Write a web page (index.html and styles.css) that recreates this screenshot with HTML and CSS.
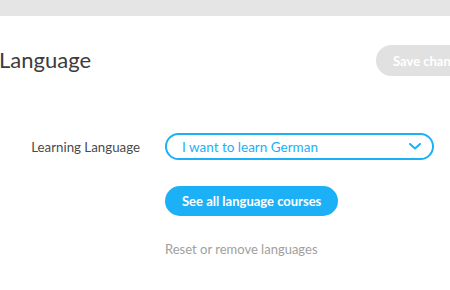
FILE: index.html
```html
<!DOCTYPE html>
<html lang="en">
<head>
    <meta charset="UTF-8">
    <title>Language</title>
    <link rel="stylesheet" href="styles.css">
</head>
<body>
<div class="topbar"></div>
<div class="page">
    <div class="header">
        <h1 class="title">Language</h1>
        <button class="save" disabled>Save changes</button>
    </div>
    <div class="form">
        <div class="label">Learning Language</div>
        <div class="select">
            <span>I want to learn German</span>
            <svg class="chevron" width="12" height="7" viewBox="0 0 12 7">
                <path d="M1 1 L6 5.5 L11 1" fill="none" stroke="#1cb0f6" stroke-width="2" stroke-linecap="round" stroke-linejoin="round"/>
            </svg>
        </div>
        <div></div>
        <div>
            <button class="courses">See all language courses</button>
        </div>
        <div></div>
        <a class="reset" href="#">Reset or remove languages</a>
    </div>
</div>
</body>
</html>
```

FILE: styles.css
```css
body {
    margin: 0;
    overflow: hidden;
    background: #fff;
    font-family: Lato, "Open Sans", sans-serif;
}

.topbar {
    height: 16px;
    background: #e5e5e5;
}

.page {
    width: 524px;
    margin-left: -1px;
}

.header {
    display: flex;
    justify-content: space-between;
    align-items: center;
    margin-top: 29px;
    height: 31px;
}

.title {
    margin: 0 0 2px;
    font-size: 22px;
    font-weight: 400;
    color: #3c3c3c;
}

.save {
    width: 147px;
    height: 31px;
    border: none;
    border-radius: 16px;
    background: #e1e1e1;
    color: #fff;
    font-family: inherit;
    font-size: 13px;
    font-weight: 700;
    text-align: left;
    padding: 0 0 0 17px;
}

.form {
    display: grid;
    grid-template-columns: 166px 269px;
    align-items: center;
    margin-top: 57px;
}

.label {
    padding-right: 25px;
    text-align: right;
    font-size: 13.3px;
    color: #4b4b4b;
}

.select {
    display: flex;
    justify-content: space-between;
    align-items: center;
    box-sizing: border-box;
    height: 27px;
    padding: 0 11px 0 15px;
    border: 2px solid #1cb0f6;
    border-radius: 14px;
    font-size: 13.5px;
    color: #1cb0f6;
}

.courses {
    margin-top: 26px;
    height: 30px;
    padding: 0 17px;
    border: none;
    border-radius: 15px;
    background: #1cb0f6;
    color: #fff;
    font-family: inherit;
    font-size: 13px;
    font-weight: 700;
}

.reset {
    margin-top: 25px;
    font-size: 13px;
    color: #a0a0a0;
    text-decoration: none;
}
```
